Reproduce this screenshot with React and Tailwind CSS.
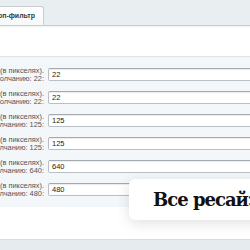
import React from "react";

const rows = [
  { label: "Ширина", def: "22", value: "22" },
  { label: "Высота", def: "22", value: "22" },
  { label: "Ширина", def: "125", value: "125" },
  { label: "Высота", def: "125", value: "125" },
  { label: "Ширина", def: "640", value: "640" },
  { label: "Высота", def: "480", value: "480" },
];

export default function App() {
  return (
    <div className="relative w-[250px] h-[250px] overflow-hidden bg-[#e9eef1] font-['Liberation_Sans',Arial,sans-serif]">
      {/* tabs bar */}
      <div className="h-[26px] flex items-end border-b border-[#c6ced3]">
        <div className="w-[44px] h-[19px] flex justify-end items-center pr-[8px] bg-gradient-to-b from-[#ffffff] to-[#f6f8f9] border-r border-t border-[#c6ced3] rounded-tr-[3px]">
          <span className="whitespace-nowrap text-[7px] font-bold text-[#333b40]">Топ-фильтр</span>
        </div>
      </div>

      {/* white spacer */}
      <div className="h-[30px] bg-white border-t border-[#eef2f4]"></div>

      {/* rows band */}
      <div className="bg-[#f4f7f9] border-t border-[#dde4e8] pt-[6px] pb-[6px] flex flex-col">
        {rows.map((r, i) => (
          <div key={i} className="h-[23px] flex items-center">
            <div className="w-[44px] shrink-0 flex justify-end">
              <div className="whitespace-nowrap text-right text-[7.4px] leading-[8px] text-[#4f5559]">
                {r.label} (в пикселях).
                <br />
                По умолчанию: {r.def}:
              </div>
            </div>
            <div className="ml-[4px] w-[260px] shrink-0 h-[13px] bg-white border border-[#b8c0c5] border-t-[#a3abb1] rounded-[2px] shadow-[inset_0_1px_1px_rgba(0,0,0,0.08)] flex items-center pl-[3px] text-[7.5px] text-[#222]">
              {r.value}
            </div>
          </div>
        ))}
      </div>

      {/* white area */}
      <div className="h-[32px] bg-white"></div>

      {/* bottom band */}
      <div className="h-[20px] bg-[#e5ebee] border-t border-[#d6dde1]"></div>

      {/* overlay card */}
      <div className="absolute left-[129px] top-[179px] w-[200px] h-[41px] bg-white rounded-[6px] shadow-[0_3px_14px_rgba(0,0,0,0.13)] flex items-center pl-[24px]">
        <span className="whitespace-nowrap text-[18px] font-bold text-[#111] tracking-[-1px] font-['DejaVu_Serif',serif]">
          Все ресайзы
        </span>
      </div>
    </div>
  );
}
